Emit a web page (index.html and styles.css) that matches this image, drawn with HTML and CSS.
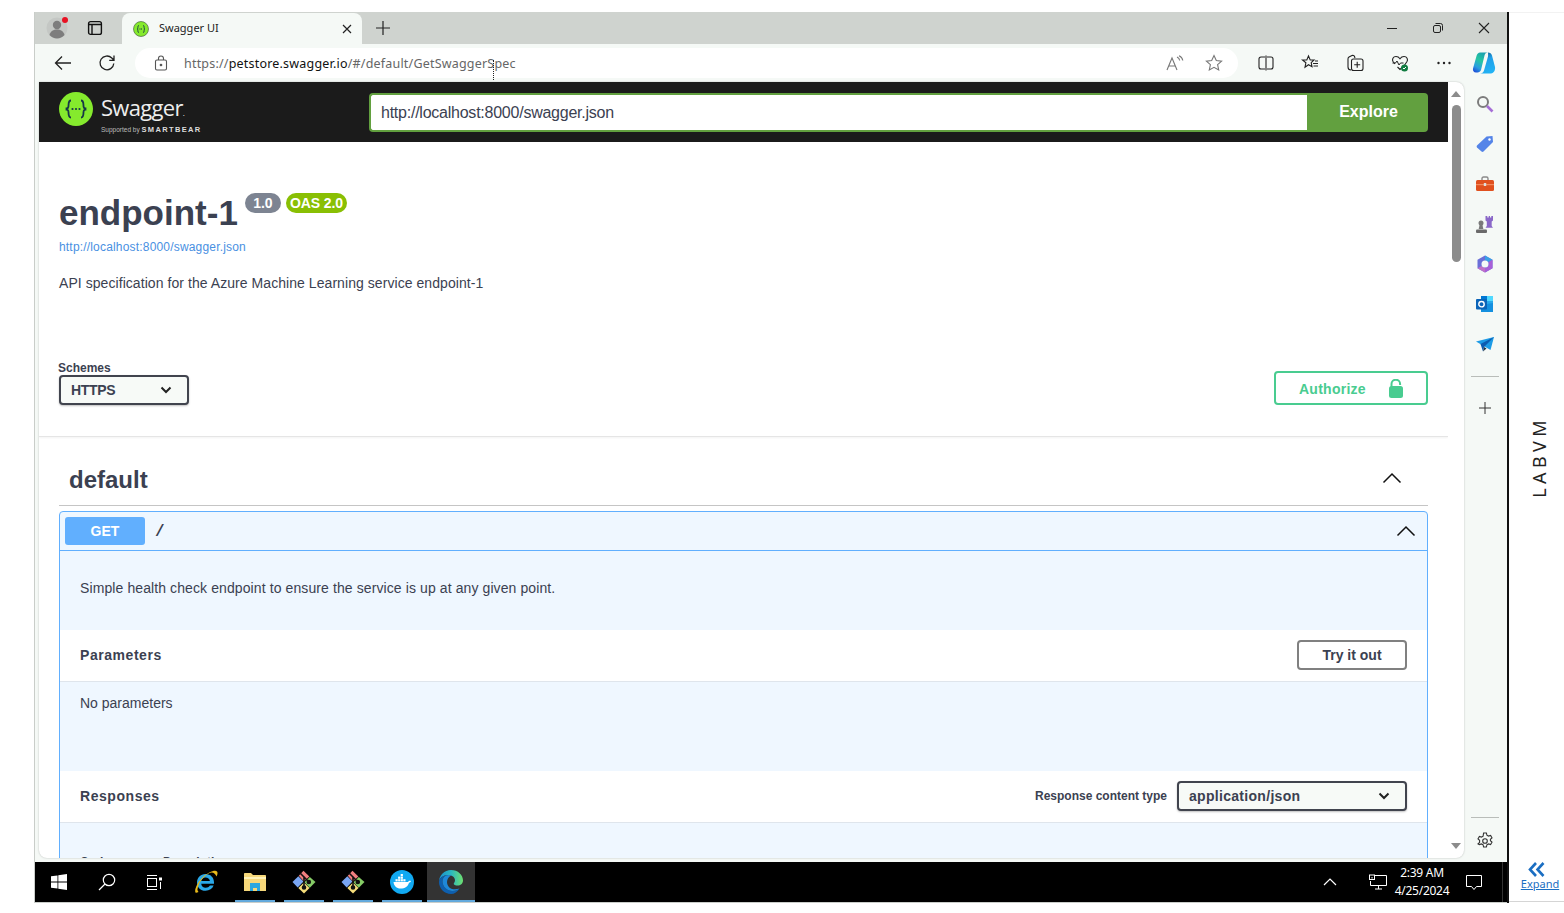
FILE: index.html
```html
<!DOCTYPE html>
<html lang="en">
<head>
    <meta charset="UTF-8">
    <title>Swagger UI</title>
    <link rel="stylesheet" href="styles.css">
</head>
<body>
    <div class="desktop">
        <div class="window">
            <div class="tabstrip">
                <svg class="profile" width="24" height="24" viewBox="0 0 24 24"><circle cx="11" cy="12" r="10.500" fill="#c4c7c4"/><circle cx="11" cy="9" r="4.200" fill="#7d7d7d"/><path d="M3.500 19c1-4 4-5.500 7.500-5.500s6.500 1.500 7.500 5.500c-2 2-4.500 3.500-7.500 3.500s-5.500-1.500-7.500-3.500z" fill="#7d7d7d"/><circle cx="19" cy="4" r="3" fill="#e81123"/></svg>
                <svg class="tab-actions" width="16" height="16" viewBox="0 0 16 16" fill="none" stroke="#111" stroke-width="1.400"><rect x="1.600" y="1.600" width="12.800" height="12.800" rx="2"/><path d="M1.600 4.500h12.800M5 4.500v9.900"/></svg>
                <div class="tab">
                    <svg width="16" height="16" viewBox="0 0 16 16"><circle cx="8" cy="8" r="7.500" fill="#85ea2d"/><circle cx="8" cy="8" r="7.500" fill="none" stroke="#3b4f3a" stroke-width=".6"/><path d="M6 4.500c-1.500 0-1 2-1.200 2.800-.1.500-.5.700-.8.700.3 0 .7.200.8.700.2.800-.3 2.800 1.200 2.800M10 4.500c1.500 0 1 2 1.200 2.800.1.500.5.700.8.700-.3 0-.7.200-.8.700-.2.800.3 2.800-1.200 2.800" fill="none" stroke="#173647" stroke-width=".9"/><path d="M6.500 8h3" stroke="#173647" stroke-dasharray="1 .5"/></svg>
                    <span class="tab-title">Swagger UI</span>
                    <svg class="tab-close" width="10" height="10" viewBox="0 0 10 10" stroke="#222" stroke-width="1.200"><path d="M1 1l8 8M9 1l-8 8"/></svg>
                </div>
                <svg class="new-tab" width="16" height="16" viewBox="0 0 16 16" stroke="#222" stroke-width="1.200"><path d="M8 1v14M1 8h14"/></svg>
                <div class="window-controls">
                    <svg width="12" height="12" viewBox="0 0 12 12" stroke="#222"><path d="M1 6.500h10"/></svg>
                    <svg width="12" height="12" viewBox="0 0 12 12" fill="none" stroke="#222"><rect x="1.500" y="3.500" width="7" height="7" rx="1.500"/><path d="M3.500 1.500h5a2 2 0 0 1 2 2v5"/></svg>
                    <svg width="12" height="12" viewBox="0 0 12 12" stroke="#222" stroke-width="1.100"><path d="M1 1l10 10M11 1l-10 10"/></svg>
                </div>
            </div>

            <div class="toolbar">
                <svg class="back" width="18" height="16" viewBox="0 0 18 16" fill="none" stroke="#222" stroke-width="1.300"><path d="M17 8H1.500M8 1.500L1.500 8 8 14.500"/></svg>
                <svg class="reload" width="18" height="18" viewBox="0 0 18 18" fill="none" stroke="#222" stroke-width="1.300"><path d="M15.800 9.500a6.900 6.900 0 1 1-2-5.500l2 2M16 1.500v4.800h-4.800"/></svg>
                <div class="address">
                    <svg width="14" height="16" viewBox="0 0 14 16" fill="none" stroke="#555" stroke-width="1.100"><rect x="1.500" y="5" width="11" height="10" rx="1.500"/><path d="M4.500 5V3.500a2.500 2.500 0 0 1 5 0V5"/><circle cx="7" cy="10" r=".8" fill="#555"/></svg>
                    <span class="url">https://<b>petstore.swagger.io</b>/#/default/GetSwaggerSpec</span>
                    <svg class="read-aloud" width="18" height="16" viewBox="0 0 18 16" fill="none" stroke="#777" stroke-width="1.100"><path d="M1 15L6 3l5 12M3 11h6M11 2c1.500.6 2.500 2 2.700 3.500M13 0.800c2 .8 3.500 2.800 3.800 4.700"/></svg>
                    <svg class="star" width="18" height="18" viewBox="0 0 18 18" fill="none" stroke="#777" stroke-width="1.100"><path d="M9 1.500l2.300 5 5.300.6-4 3.600 1.100 5.300L9 13.300 4.300 16l1.100-5.300-4-3.600 5.300-.6z"/></svg>
                </div>
                <div class="tools">
                    <svg width="16" height="16" viewBox="0 0 16 16" fill="none" stroke="#222" stroke-width="1.100"><path d="M7 2H3a2 2 0 0 0-2 2v8a2 2 0 0 0 2 2h4M9 2h4a2 2 0 0 1 2 2v8a2 2 0 0 1-2 2H9M8 .5v15"/></svg>
                    <svg width="18" height="18" viewBox="0 0 18 18" fill="none" stroke="#222" stroke-width="1.100"><path d="M7.500 2l1.700 4H13l-2.800 2.700.8 4-3.500-2-3.500 2.500.9-4.500L1.500 6h4.300zM12 9.500h5M12.500 12h4.500M14 7h3"/></svg>
                    <svg width="18" height="18" viewBox="0 0 18 18" fill="none" stroke="#222" stroke-width="1.100"><path d="M5 16c-2 0-3-1.300-3-3V6c0-.5-.5-2 1-3l3-1.500c1-.4 2.200.2 2.500 1L9 4"/><rect x="5.500" y="5" width="11.500" height="11.500" rx="2"/><path d="M11.200 7.800v6M8.200 10.800h6"/></svg>
                    <svg width="18" height="18" viewBox="0 0 18 18"><path d="M4 10L2 7.500C.8 5.500 2 2.500 5 2.500c1.500 0 3 .8 4 2.200 1-1.400 2.500-2.200 4-2.200 3 0 4.200 3 3 5L13 12 9 15.500 6.500 13" fill="none" stroke="#222" stroke-width="1.100"/><path d="M1.500 9h3l1.500-2 2 4 1.500-2h3" fill="none" stroke="#222"/><circle cx="13.500" cy="14" r="3.500" fill="#107c41"/><path d="M12 14l1 1 2-2" fill="none" stroke="#fff"/></svg>
                    <svg width="16" height="4" viewBox="0 0 16 4" fill="#222"><circle cx="2.500" cy="2" r="1.200"/><circle cx="8" cy="2" r="1.200"/><circle cx="13.500" cy="2" r="1.200"/></svg>
                    <svg class="copilot" width="24" height="24" viewBox="0 0 24 24"><defs><linearGradient id="copA" x1="0.700" y1="0" x2="0.200" y2="1"><stop offset="0" stop-color="#1a9fb0"/><stop offset=".4" stop-color="#25c6a0"/><stop offset=".75" stop-color="#2a9fe0"/><stop offset="1" stop-color="#1d50d8"/></linearGradient><linearGradient id="copB" x1="0.300" y1="0" x2="0.700" y2="1"><stop offset="0" stop-color="#0f5c8a"/><stop offset=".35" stop-color="#1f9fe8"/><stop offset="1" stop-color="#22b4f5"/></linearGradient></defs><path d="M8 1.500h8c-2 0-3 1-3.500 3L9 19c-.5 1.500-2 2.500-3.500 2.500H4c-2.200 0-3.500-2-3-4L4.500 5C5 3 6.500 1.500 8 1.500z" fill="url(#copA)"/><path d="M16 1.500c2 0 3.500 1 4 3l3 11.500c.5 2.500-1 6.500-4 6.500H8c2 0 3.500-1 4-3l4-14c.3-1.500 0-4 0-4z" fill="url(#copB)"/></svg>
                </div>
                <div class="ibeam"></div>
            </div>

            <div class="content">
                <div class="page">
                    <div class="page-scroll">
                        <header class="topbar">
                            <div class="logo">
                                <svg width="34" height="34" viewBox="0 0 34 34"><circle cx="17" cy="17" r="17" fill="#85ea2d"/><path d="M12 8.500c-3.200 0-2.200 4.500-2.600 6.200-.2 1-1 1.800-1.900 1.800v1c.9 0 1.700.8 1.900 1.800.4 1.700-.6 6.200 2.600 6.200M22 8.500c3.200 0 2.200 4.500 2.600 6.200.2 1 1 1.800 1.900 1.800v1c-.9 0-1.700.8-1.900 1.800-.4 1.700.6 6.200-2.600 6.200" fill="none" stroke="#173647" stroke-width="1.800"/><g fill="#173647"><circle cx="13.500" cy="17" r="1.100"/><circle cx="17" cy="17" r="1.100"/><circle cx="20.500" cy="17" r="1.100"/></g></svg>
                                <div class="logo-text">
                                    <span class="logo-name">Swagger<small>.</small></span>
                                    <span class="logo-sub">Supported by <b>SMARTBEAR</b></span>
                                </div>
                            </div>
                            <form class="explore-form">
                                <div class="explore-input">http://localhost:8000/swagger.json</div>
                                <div class="explore-button">Explore</div>
                            </form>
                        </header>

                        <section class="info">
                            <div class="title-row">
                                <h1>endpoint-1</h1>
                                <span class="badge badge-version">1.0</span>
                                <span class="badge badge-oas">OAS 2.0</span>
                            </div>
                            <a class="spec-link">http://localhost:8000/swagger.json</a>
                            <p class="description">API specification for the Azure Machine Learning service endpoint-1</p>
                        </section>

                        <section class="schemes">
                            <div>
                                <span class="schemes-label">Schemes</span>
                                <div class="select select-scheme">HTTPS
                                    <svg width="12" height="8" viewBox="0 0 12 8" fill="none" stroke="#222" stroke-width="2"><path d="M1.500 1.500L6 6l4.500-4.500"/></svg>
                                </div>
                            </div>
                            <div class="authorize">Authorize
                                <svg width="16" height="20" viewBox="0 0 16 20"><path d="M3.500 8V5a4.300 4.300 0 0 1 8.600 0v1" fill="none" stroke="#49cc90" stroke-width="2"/><rect x="1" y="7" width="14" height="12" rx="2.500" fill="#49cc90"/></svg>
                            </div>
                        </section>

                        <section class="tag-section">
                            <div class="tag-header">
                                <h2>default</h2>
                                <svg width="20" height="12" viewBox="0 0 20 12" fill="none" stroke="#111" stroke-width="1.500"><path d="M1.500 10.500L10 2l8.500 8.500"/></svg>
                            </div>

                            <div class="opblock">
                                <div class="summary">
                                    <span class="method">GET</span>
                                    <span class="path">/</span>
                                    <svg width="20" height="12" viewBox="0 0 20 12" fill="none" stroke="#111" stroke-width="1.500"><path d="M1.500 10.500L10 2l8.500 8.500"/></svg>
                                </div>
                                <p class="op-description">Simple health check endpoint to ensure the service is up at any given point.</p>
                                <div class="section-head">
                                    <h4>Parameters</h4>
                                    <span class="try-out">Try it out</span>
                                </div>
                                <p class="no-params">No parameters</p>
                                <div class="section-head">
                                    <h4>Responses</h4>
                                    <div class="content-type">
                                        <span class="content-type-label">Response content type</span>
                                        <div class="select select-type">application/json
                                            <svg width="12" height="8" viewBox="0 0 12 8" fill="none" stroke="#222" stroke-width="2"><path d="M1.500 1.500L6 6l4.500-4.500"/></svg>
                                        </div>
                                    </div>
                                </div>
                                <div class="responses-table"><b>Code</b><b>Description</b></div>
                            </div>
                        </section>
                    </div>
                    <div class="scrollbar">
                        <svg width="10" height="6" viewBox="0 0 10 6" fill="#8c8c8c"><path d="M0 6l5-6 5 6z"/></svg>
                        <div class="thumb"></div>
                        <svg class="arrow-down" width="10" height="6" viewBox="0 0 10 6" fill="#8c8c8c"><path d="M0 0l5 6 5-6z"/></svg>
                    </div>
                </div>

                <aside class="sidebar">
                    <div class="side-icon"><svg width="18" height="18" viewBox="0 0 18 18" fill="none"><circle cx="7" cy="7" r="5" stroke="#7c7c7c" stroke-width="2"/><path d="M11 11l5.500 5.500" stroke="#a66fd6" stroke-width="2.600"/></svg></div>
                    <div class="side-icon"><svg width="18" height="18" viewBox="0 0 18 18"><path d="M1 10.500L10.500 1.500 16.500 1l.5 6-9.500 9.500c-.6.500-1.400.5-2 0L1 12.500c-.5-.6-.5-1.400 0-2z" fill="#5484e8"/><circle cx="13.500" cy="4.500" r="1.200" fill="#fff"/></svg></div>
                    <div class="side-icon"><svg width="18" height="16" viewBox="0 0 18 16"><path d="M6 4V2.500C6 1.600 6.600 1 7.500 1h3c.9 0 1.500.6 1.500 1.500V4" fill="none" stroke="#8a8a8a" stroke-width="1.400"/><rect y="4" width="18" height="11" rx="1.500" fill="#e0501e"/><rect y="8" width="18" height="1.200" fill="#f58a5c"/><rect x="7.800" y="7" width="2.400" height="3" fill="#ddd"/></svg></div>
                    <div class="side-icon"><svg width="19" height="19" viewBox="0 0 19 19"><path d="M10.500 1h1.800v1.500h1.400V1h1.300v1.500h1.300V1H18v4.500l-1.300 1V11l1.300 1.700h-7.500l1.300-1.700V6.500l-1.300-1z" fill="#8a68c8"/><circle cx="6" cy="8" r="2.500" fill="#7a7a7a"/><path d="M4.500 10h3l.8 4H3.700z" fill="#7a7a7a"/><rect x="1" y="14.500" width="11" height="3.500" rx="1" fill="#6a6a6a"/></svg></div>
                    <div class="side-icon"><svg width="18" height="18" viewBox="0 0 18 18"><path d="M9 .5l7.500 4.200v8.600L9 17.500 1.500 13.300V4.700z" fill="#6a6fd8"/><path d="M9 .5l7.500 4.200-4 2.300L9 5z" fill="#3aa0e6"/><path d="M16.500 4.700v8.600L9 17.500V13l3.500-2V7z" fill="#a860d8"/><path d="M1.500 13.300L9 17.500V13l-3.500-2z" fill="#c070c8"/><circle cx="9" cy="9" r="3.500" fill="#f5f9f6"/></svg></div>
                    <div class="side-icon"><svg width="18" height="18" viewBox="0 0 18 18"><rect x="5" y="1" width="12" height="16" rx="1" fill="#28a8ea"/><rect x="5" y="1" width="6" height="5" fill="#0078d4"/><rect x="11" y="1" width="6" height="5" fill="#50d9ff"/><path d="M5 10l12-2v9H5z" fill="#1490df"/><rect y="4" width="11" height="10.500" rx="1" fill="#0a64b8"/><circle cx="5.500" cy="9.200" r="2.700" fill="none" stroke="#fff" stroke-width="1.400"/></svg></div>
                    <div class="side-icon"><svg width="18" height="15" viewBox="0 0 18 15"><path d="M0 4.500L18 0l-3.500 13-6-3.500z" fill="#1c9be6"/><path d="M4.500 7L18 0 8 10l-1 4.500z" fill="#0c5cb0"/><path d="M8 10l-1 4.500 3.500-3z" fill="#20364a"/></svg></div>
                    <div class="sidebar-rule"></div>
                    <div class="side-icon side-add"><svg width="14" height="14" viewBox="0 0 14 14" stroke="#333"><path d="M7 1v12M1 7h12"/></svg></div>
                    <div class="sidebar-spacer"></div>
                    <div class="sidebar-rule"></div>
                    <div class="side-icon side-gear"><svg width="18" height="18" viewBox="0 0 18 18" fill="none" stroke="#333" stroke-width="1.100"><path d="M7.600 1h2.800l.5 2.200 1.600.9 2.100-.7 1.400 2.400-1.600 1.500v1.400l1.600 1.500-1.400 2.400-2.100-.7-1.600.9-.5 2.200H7.600l-.5-2.200-1.600-.9-2.100.7L2 11.800l1.600-1.500V8.300L2 6.800l1.400-2.400 2.100.7 1.600-.9z"/><circle cx="9" cy="9" r="2.300"/></svg></div>
                </aside>
            </div>

            <footer class="taskbar">
                <div class="task-item task-system">
                    <svg width="16" height="16" viewBox="0 0 16 16" fill="#fff"><path d="M0 2.300l6.500-.9v6.200H0zM7.300 1.300L16 0v7.600H7.300zM0 8.400h6.500v6.200L0 13.700zM7.300 8.400H16V16l-8.700-1.200z"/></svg>
                </div>
                <div class="task-item task-system">
                    <svg width="18" height="18" viewBox="0 0 18 18" fill="none" stroke="#fff" stroke-width="1.200"><circle cx="11" cy="7" r="5.700"/><path d="M7 11l-6 6"/></svg>
                </div>
                <div class="task-item">
                    <svg width="16" height="15" viewBox="0 0 16 15" fill="none" stroke="#fff"><path d="M0 .5h10M0 14.500h10"/><rect x=".5" y="3.500" width="9" height="8"/><rect x="12.500" y="3" width="2" height="2" fill="#fff"/><path d="M13.500 7v7"/></svg>
                </div>
                <div class="task-item task-gap">
                    <svg width="24" height="24" viewBox="0 0 24 24"><path d="M20 13.800H7.200c.3 2.500 2 4 4.500 4 1.800 0 3.300-.8 4.200-2.200h3.700c-1.200 3.200-4.200 5.200-8 5.200C6.500 20.800 3 17.300 3 12.500S6.500 4 11.500 4 20 7.500 20 12.500zM7.300 11h8.600c-.3-2-2-3.400-4.300-3.400S7.600 9 7.300 11z" fill="#2aa8e8"/><path d="M1.500 22.500C0 20 3.500 12 9 7c5-4.500 12-7.500 14-5.500 1 1 .5 3-.5 5-.8-2-2.500-4-5-4-5 .5-13 9-14 16.500-.2 1 .2 2.300 1 3-1.500.8-2.500 1-3 .5z" fill="#e8b91a"/></svg>
                </div>
                <div class="task-item running">
                    <svg width="22" height="20" viewBox="0 0 22 20"><path d="M0 2c0-.6.400-1 1-1h6l2 2h12c.6 0 1 .4 1 1v15H0z" fill="#f5d77a"/><rect y="5" width="22" height="2" fill="#fff2b8"/><path d="M6 11h10v8h-3v-3H9v3H6z" fill="#2aa7e0"/></svg>
                </div>
                <div class="task-item running">
                    <svg width="24" height="24" viewBox="0 0 24 24"><path d="M.5 12l5.800-5.800 5.200 5.200-5.800 6z" fill="#7aa6f2"/><path d="M6.800 5.700L11.500.8l5.800 5.700-5.300 5z" fill="#f07f7f"/><path d="M17.800 7L23.500 12l-5.700 5.800-5.300-5.500z" fill="#85cc66"/><path d="M6.300 18l5.700-5.500 5.500 5.500-5.500 5.500z" fill="#f5dc7a"/><g fill="none" stroke="#111" stroke-width="1.600"><path d="M8 3l4 4v10M12 7l4.500 4.500"/><circle cx="16.800" cy="12" r="1.500" fill="#111"/><circle cx="12" cy="17.500" r="1.500" fill="#111"/></g></svg>
                </div>
                <div class="task-item running">
                    <svg width="24" height="24" viewBox="0 0 24 24"><path d="M.5 12l5.800-5.800 5.200 5.200-5.800 6z" fill="#7aa6f2"/><path d="M6.800 5.700L11.500.8l5.800 5.700-5.300 5z" fill="#f07f7f"/><path d="M17.800 7L23.500 12l-5.700 5.800-5.300-5.500z" fill="#85cc66"/><path d="M6.300 18l5.700-5.500 5.500 5.500-5.500 5.500z" fill="#f5dc7a"/><g fill="none" stroke="#111" stroke-width="1.600"><path d="M8 3l4 4v10M12 7l4.500 4.500"/><circle cx="16.800" cy="12" r="1.500" fill="#111"/><circle cx="12" cy="17.500" r="1.500" fill="#111"/></g></svg>
                </div>
                <div class="task-item running">
                    <svg width="24" height="24" viewBox="0 0 24 24"><circle cx="12" cy="12" r="12" fill="#11a9f2"/><path d="M3.500 12h14.500c.6-1 1.800-1.500 3-1-.4 1-1 1.500-2 1.700C18 16.500 15 18.500 10.500 18.500c-4 0-6.500-2.500-7-6.500z" fill="#fff"/><g fill="#fff"><rect x="5.500" y="9.200" width="2.200" height="2.200"/><rect x="8.100" y="9.200" width="2.200" height="2.200"/><rect x="10.700" y="9.200" width="2.200" height="2.200"/><rect x="8.100" y="6.600" width="2.200" height="2.200"/><rect x="10.700" y="6.600" width="2.200" height="2.200"/><rect x="10.700" y="4" width="2.200" height="2.200"/><rect x="13.300" y="9.200" width="2.200" height="2.200"/></g></svg>
                </div>
                <div class="task-item running active">
                    <svg width="26" height="26" viewBox="0 0 26 26"><defs><linearGradient id="edgeTop" x1="0" y1="0.500" x2="1" y2="0.500"><stop offset="0" stop-color="#1a8fd0"/><stop offset=".5" stop-color="#2ab8c0"/><stop offset="1" stop-color="#6ee070"/></linearGradient></defs><path d="M1 13C1 6 6.500 1 13 1c7 0 12 5 12 10.500 0 3-2.500 5-5.500 5-2 0-3.800-.6-3.800-1.800 0-.8 1.300-1.300 1.300-3.500C17 8.500 14 6 10.500 6 5.500 6 1 9 1 13z" fill="url(#edgeTop)"/><path d="M1 13c0-4 4.500-7 9.500-7C6.500 6 4.500 9 4.500 12.500c0 5.500 5 9.500 10 9.500 3 0 5.500-1 7-2.500C19.500 23 16.500 25 13 25 6.500 25 1 19.500 1 13z" fill="#0e5fae"/><path d="M10.500 6c-4 0-6 3-6 6.500 0 5.500 5 9.500 10 9.500 3 0 5.500-1 7-2.500-1.500.5-3 .8-4.500.8-5.500 0-8-3.800-8-7.300 0-3 1.800-5.500 4.500-6.800z" fill="#1e88d8"/></svg>
                </div>
                <div class="tray">
                    <svg class="tray-chevron" width="14" height="8" viewBox="0 0 14 8" fill="none" stroke="#fff" stroke-width="1.200"><path d="M1 7l6-6 6 6"/></svg>
                    <svg class="tray-network" width="18" height="16" viewBox="0 0 18 16" fill="none" stroke="#fff"><path d="M5 1.500h12.500v10H1.500V7"/><path d="M9.500 11.500V15M6 15h7"/><rect x=".5" y="1" width="5" height="4.500"/><path d="M3 3v1.500"/></svg>
                    <div class="clock"><span>2:39 AM</span><span>4/25/2024</span></div>
                    <svg class="tray-notify" width="16" height="15" viewBox="0 0 16 15" fill="none" stroke="#fff"><path d="M.5.500h15v11h-5l-2.500 3-2.500-3h-5z"/></svg>
                    <div class="tray-divider"></div>
                </div>
            </footer>
        </div>

        <div class="lab-panel">
            <span class="lab-name">LABVM</span>
            <div class="lab-expand">
                <svg width="17" height="15" viewBox="0 0 17 15" fill="none" stroke="#1b6ec2" stroke-width="2.600"><path d="M8 1L2 7.500 8 14M15.500 1l-6 6.500 6 6.500"/></svg>
                <a>Expand</a>
            </div>
        </div>
    </div>
</body>
</html>
```

FILE: styles.css
```css
/* Global Styles */
html, body {
    margin: 0;
    padding: 0;
    height: 100%;
    overflow: hidden;
    background-color: #fff;
}

body {
    font-family: "Liberation Sans", Arial, sans-serif;
    color: #3b4151;
}

.desktop {
    display: flex;
    height: 891px;
    padding: 12px 0 0 34px;
}

/* Browser Window */
.window {
    width: 1472px;
    height: 891px;
    display: flex;
    flex-direction: column;
    position: relative;
    flex-shrink: 0;
    border-left: 1px solid #c9cdc9;
    border-right: 2px solid #111;
    background-color: #f5f9f6;
}

.tabstrip {
    height: 32px;
    display: flex;
    align-items: center;
    background-color: #cfd3cf;
}

.profile {
    margin-left: 11px;
}

.tab-actions {
    margin-left: 17px;
}

.tab {
    width: 240px;
    height: 31px;
    margin: 1px 0 0 19px;
    padding: 0 10px 0 11px;
    box-sizing: border-box;
    display: flex;
    align-items: center;
    background-color: #f5f9f6;
    border-radius: 8px 8px 0 0;
    align-self: flex-end;
}

.tab-title {
    margin: -2px 0 0 10px;
    flex: 1;
    font-family: "Noto Sans", sans-serif;
    font-size: 11px;
    color: #222;
}

.new-tab {
    margin-left: 13px;
}

.window-controls {
    margin-left: auto;
    padding-right: 17px;
    display: flex;
    gap: 34px;
}

.toolbar {
    height: 38px;
    display: flex;
    align-items: center;
    position: relative;
}

.back {
    margin-left: 19px;
}

.reload {
    margin-left: 26px;
}

.address {
    width: 1103px;
    height: 30px;
    margin-left: 19px;
    padding: 0 15px 0 19px;
    box-sizing: border-box;
    display: flex;
    align-items: center;
    background-color: #fff;
    border-radius: 15px;
}

.url {
    margin-left: 16px;
    flex: 1;
    font-family: "Noto Sans", sans-serif;
    font-size: 12.500px;
    letter-spacing: 0.2px;
    color: #666;
}

.url b {
    font-weight: normal;
    color: #111;
}

.read-aloud {
    margin-right: 21px;
}

.tools {
    display: flex;
    align-items: center;
    margin-left: 20px;
    gap: 27px;
}

.copilot {
    margin-left: -7px;
}

.ibeam {
    position: absolute;
    left: 458px;
    top: 16px;
    width: 0;
    height: 20px;
    border-left: 1px dotted #222;
}

/* Page */
.content {
    flex: 1;
    display: flex;
    min-height: 0;
}

.page {
    width: 1425px;
    height: 776px;
    margin-left: 4px;
    flex-shrink: 0;
    display: flex;
    overflow: hidden;
    background-color: #fff;
    border-radius: 0 8px 8px 8px;
    box-shadow: 0 0 2px rgba(0, 0, 0, 0.25);
}

.page-scroll {
    width: 1409px;
    overflow: hidden;
}

.scrollbar {
    width: 16px;
    display: flex;
    flex-direction: column;
    align-items: center;
    padding-top: 9px;
    box-sizing: border-box;
}

.thumb {
    width: 9px;
    height: 157px;
    margin-top: 8px;
    background-color: #8c8c8c;
    border-radius: 5px;
}

.arrow-down {
    margin-top: auto;
    margin-bottom: 9px;
}

/* Swagger Header */
.topbar {
    height: 60px;
    padding: 0 20px;
    display: flex;
    align-items: center;
    background-color: #1b1b1b;
}

.logo {
    width: 310px;
    display: flex;
    align-items: center;
    gap: 8px;
}

.logo > svg {
    margin-top: -6px;
}

.logo-text {
    display: flex;
    flex-direction: column;
    padding-top: 4px;
    color: #fff;
}

.logo-name {
    font-family: "Open Sans", sans-serif;
    font-size: 22px;
    line-height: 25px;
    letter-spacing: -0.7px;
    color: #eee;
}

.logo-name small {
    font-size: 8px;
}

.logo-sub {
    font-size: 6.500px;
    line-height: 9px;
    color: #bbb;
}

.logo-sub b {
    font-size: 7.500px;
    letter-spacing: 1.350px;
    color: #ddd;
}

.explore-form {
    flex: 1;
    display: flex;
    height: 39px;
    margin: 0;
}

.explore-input {
    flex: 1;
    display: flex;
    align-items: center;
    padding: 2px 0 0 10px;
    background-color: #fff;
    border: 2px solid #62a03f;
    border-right: none;
    border-radius: 4px 0 0 4px;
    font-size: 16px;
    letter-spacing: -0.24px;
    color: #3b4151;
}

.explore-button {
    width: 121px;
    padding-left: 2px;
    box-sizing: border-box;
    display: flex;
    align-items: center;
    justify-content: center;
    background-color: #62a03f;
    border-radius: 0 4px 4px 0;
    font-size: 16px;
    font-weight: bold;
    color: #fff;
}

/* Info */
.info {
    padding: 50px 20px 0;
}

.title-row {
    display: flex;
    align-items: flex-start;
    height: 42px;
}

h1 {
    margin: 0 7px 0 0;
    font-size: 35px;
    line-height: 42px;
    font-weight: bold;
    color: #3b4151;
}

.badge {
    margin-top: 1px;
    height: 20px;
    padding: 0 4px;
    display: flex;
    align-items: center;
    border-radius: 10px;
    font-size: 14px;
    font-weight: bold;
    letter-spacing: -0.1px;
    color: #fff;
}

.badge-version {
    width: 28px;
    justify-content: center;
    background-color: #7d8492;
}

.badge-oas {
    margin-left: 5px;
    background-color: #89bf04;
}

.spec-link {
    display: block;
    margin-top: 6px;
    font-size: 12px;
    line-height: 14px;
    letter-spacing: 0.18px;
    color: #4990e2;
}

.description {
    margin: 20px 0 0;
    font-size: 14px;
    line-height: 18px;
    letter-spacing: 0.06px;
}

/* Schemes */
.schemes {
    margin-top: 69px;
    height: 75px;
    padding: 0 20px;
    display: flex;
    justify-content: space-between;
    border-bottom: 1px solid #e5e5e5;
    box-shadow: 0 1px 2px rgba(0, 0, 0, 0.05);
}

.schemes-label {
    display: block;
    margin-left: -1px;
    font-size: 12px;
    line-height: 14px;
    font-weight: bold;
}

.select {
    height: 30px;
    padding: 0 15px 0 10px;
    box-sizing: border-box;
    display: flex;
    align-items: center;
    justify-content: space-between;
    background-color: #f7faf7;
    border: 2px solid #41444e;
    border-radius: 4px;
    box-shadow: 0 1px 2px rgba(0, 0, 0, 0.25);
    font-size: 14px;
    font-weight: bold;
    letter-spacing: 0.3px;
}

.select-scheme {
    width: 130px;
    letter-spacing: -0.3px;
}

.select-type {
    width: 230px;
}

.authorize {
    width: 154px;
    height: 34px;
    margin-top: 10px;
    padding: 1px 22px 0 23px;
    box-sizing: border-box;
    display: flex;
    align-items: center;
    justify-content: space-between;
    background-color: #fff;
    border: 2px solid #49cc90;
    border-radius: 4px;
    font-size: 14px;
    font-weight: bold;
    letter-spacing: 0.25px;
    color: #49cc90;
}

/* Tag Section */
.tag-section {
    padding: 0 20px;
}

.tag-header {
    height: 50px;
    padding: 18px 26px 0 10px;
    display: flex;
    align-items: center;
    justify-content: space-between;
    border-bottom: 1px solid #c5c5c5;
}

.tag-header svg {
    margin-bottom: 4px;
}

h2 {
    margin: 0;
    font-size: 24px;
    font-weight: bold;
    color: #3b4151;
}

.opblock {
    margin-top: 5px;
    background-color: #eff7ff;
    border: 1px solid #61affe;
    border-radius: 4px 4px 0 0;
}

.summary {
    height: 38px;
    padding: 0 11px 0 5px;
    display: flex;
    align-items: center;
    border-bottom: 1px solid #61affe;
}

.method {
    width: 80px;
    height: 28px;
    display: flex;
    align-items: center;
    justify-content: center;
    background-color: #61affe;
    border-radius: 3px;
    font-size: 14px;
    font-weight: bold;
    color: #fff;
}

.path {
    flex: 1;
    padding: 2px 0 0 10px;
    font-family: "Liberation Mono", monospace;
    font-size: 16px;
    font-weight: bold;
}

.op-description {
    height: 79px;
    margin: 0;
    padding: 0 20px 6px;
    box-sizing: border-box;
    display: flex;
    align-items: center;
    font-size: 14px;
    letter-spacing: 0.1px;
}

.section-head {
    height: 52px;
    padding: 0 20px 2px;
    box-sizing: border-box;
    display: flex;
    align-items: center;
    justify-content: space-between;
    background-color: #fff;
    border-bottom: 1px solid #dfe5ec;
}

h4 {
    margin: 0;
    font-size: 14px;
    font-weight: bold;
    letter-spacing: 0.55px;
}

.try-out {
    width: 110px;
    height: 30px;
    box-sizing: border-box;
    display: flex;
    align-items: center;
    justify-content: center;
    background-color: #fff;
    border: 2px solid #808080;
    border-radius: 4px;
    font-size: 14px;
    font-weight: bold;
}

.no-params {
    height: 89px;
    margin: 0;
    padding: 13px 20px 0;
    box-sizing: border-box;
    font-size: 14px;
    line-height: 16px;
}

.content-type {
    display: flex;
    align-items: center;
    gap: 10px;
}

.content-type-label {
    font-size: 12px;
    font-weight: bold;
}

.responses-table {
    height: 60px;
    padding: 32px 20px 0;
    box-sizing: border-box;
    display: flex;
    gap: 53px;
    font-size: 12px;
}

/* Edge Sidebar */
.sidebar {
    flex: 1;
    height: 780px;
    padding: 2px 2px 1px 0;
    box-sizing: border-box;
    display: flex;
    flex-direction: column;
    align-items: center;
}

.side-icon {
    height: 40px;
    flex-shrink: 0;
    display: flex;
    align-items: center;
    justify-content: center;
}

.sidebar-rule {
    width: 28px;
    height: 1px;
    flex-shrink: 0;
    margin-top: 12px;
    background-color: #b9bdb9;
}

.side-add {
    margin-top: 11px;
}

.sidebar-spacer {
    flex: 1;
}

.side-gear {
    margin-top: 3px;
}

/* Taskbar */
.taskbar {
    height: 40px;
    display: flex;
    background-color: #000;
    border-bottom: 1px solid #c9cdc9;
    flex-shrink: 0;
    gap: 1px;
}

.task-item {
    width: 48px;
    height: 40px;
    box-sizing: border-box;
    display: flex;
    align-items: center;
    justify-content: center;
    position: relative;
}

.task-system {
    margin-right: -1px;
}

.task-gap {
    margin-left: 2px;
}

.running::after {
    content: "";
    position: absolute;
    left: 4px;
    right: 4px;
    bottom: 0;
    height: 2px;
    background-color: #63a9dc;
}

.active {
    background-color: #333;
}

.active::after {
    left: 0;
    right: 0;
}

.tray {
    flex: 1;
    display: flex;
    align-items: center;
    color: #fff;
}

.tray-chevron {
    margin-left: auto;
}

.tray-network {
    margin-left: 32px;
}

.clock {
    width: 60px;
    margin-left: 5px;
    display: flex;
    flex-direction: column;
    align-items: center;
    font-family: "Noto Sans", sans-serif;
    font-size: 12px;
    line-height: 18px;
    letter-spacing: -0.25px;
}

.tray-notify {
    margin-left: 14px;
    margin-right: 20px;
}

.tray-divider {
    width: 1px;
    height: 40px;
    margin-right: 4px;
    background-color: #333;
}

/* Lab Panel */
.lab-panel {
    flex: 1;
    height: 890px;
    display: flex;
    flex-direction: column;
    align-items: center;
    border-top: 1px solid #f2f2f2;
    border-bottom: 1px solid #d5d5d5;
    box-sizing: border-box;
}

.lab-name {
    margin: 403px 0 0 4px;
    writing-mode: vertical-rl;
    transform: rotate(180deg);
    font-family: "Noto Sans", sans-serif;
    font-size: 18px;
    letter-spacing: 4.400px;
    color: #222;
}

.lab-expand {
    margin-top: auto;
    padding-bottom: 10px;
    display: flex;
    flex-direction: column;
    align-items: center;
    font-family: "Noto Sans", sans-serif;
    font-size: 11px;
    line-height: 14px;
    color: #1b6ec2;
}

.lab-expand a {
    margin-left: 7px;
    text-decoration: underline;
}
```
